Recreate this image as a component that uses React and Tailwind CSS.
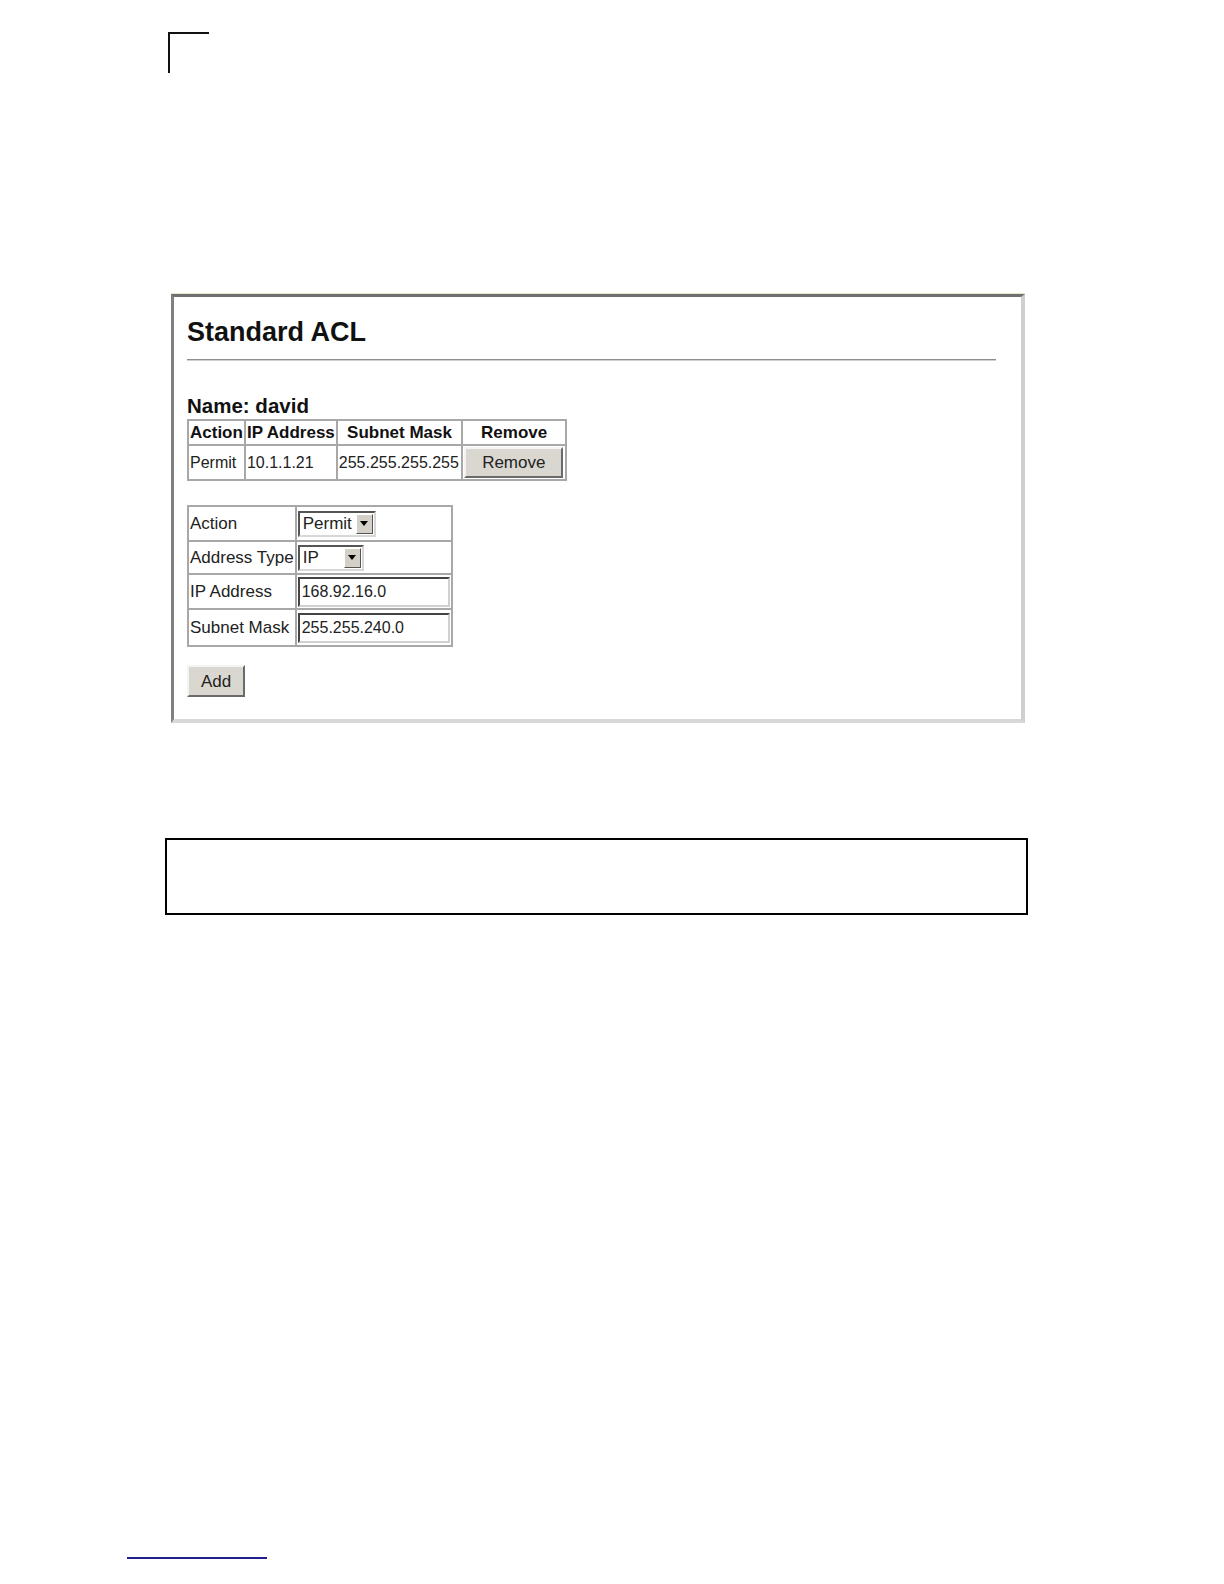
import React from "react";

function Arrow() {
  return (
    <svg width="8" height="5" viewBox="0 0 8 5">
      <polygon points="0,0 8,0 4,5" fill="#000" />
    </svg>
  );
}

function Select({ label, width }) {
  return (
    <div
      className={`flex items-center h-[26px] ${width} border-2 border-t-[#555] border-l-[#555] border-b-[#d8d8d8] border-r-[#d8d8d8] bg-white`}
    >
      <span className="flex-1 pl-[3px] text-[17px] leading-none text-[#222]">{label}</span>
      <span className="flex items-center justify-center w-[17px] h-[20px] mr-[1px] bg-[#d4d0c8] border border-t-white border-l-white border-b-[#555] border-r-[#555]">
        <Arrow />
      </span>
    </div>
  );
}

function Input({ value }) {
  return (
    <div className="flex items-center h-[30px] w-[152px] border-2 border-t-[#444] border-l-[#444] border-b-[#d0d0d0] border-r-[#d0d0d0] bg-white pl-[2px] text-[16px] leading-none text-[#222]">
      {value}
    </div>
  );
}

function Button({ children, className }) {
  return (
    <div
      className={`flex items-center justify-center bg-[#d9d7d0] border-2 border-t-[#f4f4f4] border-l-[#f4f4f4] border-b-[#6a6a6a] border-r-[#6a6a6a] text-[17px] leading-none text-[#222] ${className}`}
    >
      {children}
    </div>
  );
}

export default function App() {
  const cell = "border-2 border-[#a8a8a8] px-[1px]";
  return (
    <div
      className="w-full h-screen bg-white flex flex-col items-start overflow-hidden"
      style={{ fontFamily: '"Liberation Sans", Arial, sans-serif' }}
    >
      <div className="mt-[32px] ml-[168px] w-[41px] h-[41px] shrink-0 border-t-2 border-l-2 border-[#111]" />

      <div className="mt-[220px] ml-[171px] w-[854px] h-[430px] shrink-0 border-t-[1px] border-[#e6e6c8]">
        <div className="w-full h-full border-t-[3px] border-l-[3px] border-t-[#707070] border-l-[#808080] border-r-[4px] border-b-[4px] border-r-[#cfcfcf] border-b-[#d8d8d8] flex flex-col items-start pl-[13px] pr-[25px]">
          <div className="mt-[20px] text-[27px] leading-[30px] font-bold text-[#111]">Standard ACL</div>
          <div className="mt-[12px] self-stretch h-[2px] bg-[#8e8e8e] border-b border-[#d0d0d0]" />
          <div className="mt-[34px] text-[20.5px] leading-[22px] font-bold text-[#111]">Name: david</div>
          <table className="mt-[2px] border-collapse border-2 border-[#a8a8a8] text-[16px] text-[#111]" style={{ width: 380 }}>
            <tbody>
              <tr className="h-[25px] font-bold text-[17px] leading-[20px]">
                <td className={`${cell} w-[57px] text-left whitespace-nowrap`}>Action</td>
                <td className={`${cell} w-[90px] text-left whitespace-nowrap`}>IP Address</td>
                <td className={`${cell} w-[128px] text-center whitespace-nowrap`}>Subnet Mask</td>
                <td className={`${cell} w-[105px] text-center`}>Remove</td>
              </tr>
              <tr className="h-[35px]">
                <td className={`${cell} text-[#222]`}>Permit</td>
                <td className={`${cell} text-[#222]`}>10.1.1.21</td>
                <td className={`${cell} text-[#222] whitespace-nowrap`}>255.255.255.255</td>
                <td className={`${cell}`}>
                  <Button className="w-[99px] h-[31px]">Remove</Button>
                </td>
              </tr>
            </tbody>
          </table>

          <table className="mt-[24px] border-collapse border-2 border-[#a8a8a8] text-[17px] text-[#222]" style={{ width: 266 }}>
            <tbody>
              <tr className="h-[35px]">
                <td className={`${cell} w-[108px]`}>Action</td>
                <td className={`${cell} w-[158px]`}>
                  <Select label="Permit" width="w-[78px]" />
                </td>
              </tr>
              <tr className="h-[33px]">
                <td className={`${cell} whitespace-nowrap`}>Address Type</td>
                <td className={cell}>
                  <Select label="IP" width="w-[66px]" />
                </td>
              </tr>
              <tr className="h-[35px]">
                <td className={cell}>IP Address</td>
                <td className={cell}>
                  <Input value="168.92.16.0" />
                </td>
              </tr>
              <tr className="h-[37px]">
                <td className={`${cell} whitespace-nowrap`}>Subnet Mask</td>
                <td className={cell}>
                  <Input value="255.255.240.0" />
                </td>
              </tr>
            </tbody>
          </table>

          <Button className="mt-[18px] w-[58px] h-[32px]">Add</Button>
        </div>
      </div>

      <div className="mt-[115px] ml-[165px] w-[863px] h-[77px] shrink-0 border-2 border-black" />

      <div className="mt-[642px] ml-[127px] w-[140px] h-[2px] shrink-0 bg-[#1e1e8c]" />
    </div>
  );
}
